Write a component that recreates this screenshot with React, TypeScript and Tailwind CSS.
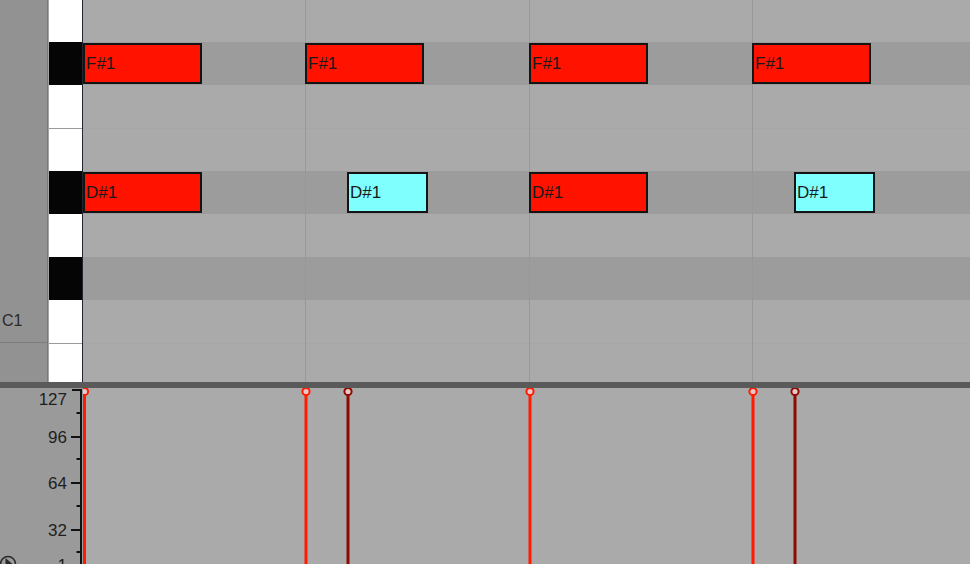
import React from "react";

type Row = { name: string; black: boolean; sep?: boolean; first?: boolean };
const rows: Row[] = [
  { name: "G1", black: false, first: true },
  { name: "F#1", black: true },
  { name: "F1", black: false },
  { name: "E1", black: false, sep: true },
  { name: "D#1", black: true },
  { name: "D1", black: false },
  { name: "C#1", black: true },
  { name: "C1", black: false },
  { name: "B0", black: false, sep: true },
];

type Note = { left: number; width: number; color: "red" | "cyan" };
const notes: Record<string, Note[]> = {
  "F#1": [
    { left: 0, width: 119, color: "red" },
    { left: 222, width: 119, color: "red" },
    { left: 446, width: 119, color: "red" },
    { left: 669, width: 119, color: "red" },
  ],
  "D#1": [
    { left: 0, width: 119, color: "red" },
    { left: 264, width: 81, color: "cyan" },
    { left: 446, width: 119, color: "red" },
    { left: 711, width: 81, color: "cyan" },
  ],
};

const beats = [222, 446, 669];
const stems = [
  { x: 1.5, dark: false },
  { x: 223, dark: false },
  { x: 265, dark: true },
  { x: 447, dark: false },
  { x: 670, dark: false },
  { x: 712, dark: true },
];

const FONT = "'Liberation Sans', Arial, sans-serif";

function Axis() {
  const major = [
    { y: 49, label: "96" },
    { y: 95, label: "64" },
    { y: 142, label: "32" },
  ];
  const minor = [25, 71, 118, 164];
  return (
    <svg width="83" height="176" className="block shrink-0">
      <rect x="0" y="0" width="83" height="176" fill="#9a9a9a" />
      <line x1="81" y1="1.5" x2="81" y2="176" stroke="#111" strokeWidth="2" />
      <line x1="72" y1="2" x2="82" y2="2" stroke="#111" strokeWidth="2" />
      <text x="67" y="17" textAnchor="end" fontSize="17" fill="#1e1e1e" fontFamily={FONT}>127</text>
      {major.map((m) => (
        <g key={m.label}>
          <line x1="71" y1={m.y} x2="81" y2={m.y} stroke="#111" strokeWidth="2" />
          <text x="67" y={m.y + 6} textAnchor="end" fontSize="17" fill="#1e1e1e" fontFamily={FONT}>{m.label}</text>
        </g>
      ))}
      {minor.map((y) => (
        <line key={y} x1="76.5" y1={y} x2="81" y2={y} stroke="#111" strokeWidth="2" />
      ))}
      <text x="67" y="183" textAnchor="end" fontSize="17" fill="#1e1e1e" fontFamily={FONT}>1</text>
      <circle cx="8" cy="176" r="7.5" fill="none" stroke="#2a2a2a" strokeWidth="1.5" />
      <path d="M5.5 170 L12.5 176 L5.5 182 Z" fill="#2a2a2a" />
    </svg>
  );
}

export default function App() {
  return (
    <div className="w-[970px] h-[564px] overflow-hidden bg-[#aaaaaa] font-['Liberation_Sans',Arial,sans-serif]">
      {/* piano roll */}
      <div className="flex h-[382px] overflow-hidden">
        {/* gutter */}
        <div className="w-[47px] shrink-0 bg-[#929292] flex flex-col">
          <div className="h-[300px] shrink-0" />
          <div className="h-[43px] shrink-0 border-b border-[#7c7c7c] flex items-center pl-[2px] text-[16px] text-[#2a2a2a]">
            C1
          </div>
        </div>
        <div className="w-px shrink-0 bg-[#7a7a7a]" />
        <div className="w-px shrink-0 bg-[#a4a4a4]" />
        {/* keys */}
        <div className="w-[33px] shrink-0 flex flex-col">
          {rows.map((r) => (
            <div
              key={r.name}
              className={`${r.first ? "h-[42px]" : "h-[43px]"} shrink-0 ${
                r.black ? "bg-[#050505]" : "bg-white"
              } ${r.sep ? "border-t-[1.5px] border-[#9a9a9a]" : ""}`}
            />
          ))}
        </div>
        <div className="w-px shrink-0 bg-[#23252f]" />
        {/* grid */}
        <div className="relative flex-1 flex flex-col">
          {rows.map((r) => (
            <div
              key={r.name}
              className={`relative ${r.first ? "h-[42px]" : "h-[43px]"} shrink-0 ${
                r.black ? "bg-[#9c9c9c]" : "bg-[#aaaaaa]"
              } ${r.sep ? "border-t border-[#a7a7a7]" : ""}`}
            >
              {(notes[r.name] || []).map((n, i) => (
                <div
                  key={i}
                  className={`absolute top-[1px] bottom-[1px] z-10 border-2 border-[#141414] flex items-center pl-px text-[17px] leading-none text-[#1a1a1a] ${
                    n.color === "red" ? "bg-[#ff1200]" : "bg-[#80ffff]"
                  }`}
                  style={{ left: n.left, width: n.width }}
                >
                  {r.name}
                </div>
              ))}
            </div>
          ))}
          {beats.map((b) => (
            <div
              key={b}
              className="absolute top-0 bottom-0 w-px bg-[#989898]"
              style={{ left: b }}
            />
          ))}
        </div>
      </div>
      {/* divider */}
      <div className="h-[6px] bg-[#5a5a5a]" />
      {/* velocity */}
      <div className="flex h-[176px]">
        <Axis />
        <div className="relative flex-1 bg-[#aaaaaa]">
          <svg width="887" height="176" className="absolute inset-0">
            {stems.map((s, i) => {
              const c = s.dark ? "#8f0a00" : "#ff1a00";
              return (
                <g key={i}>
                  <line x1={s.x} y1="6" x2={s.x} y2="176" stroke={c} strokeWidth="3" />
                  <circle cx={s.x} cy="3.5" r="3.6" fill="#e8c8c8" stroke={c} strokeWidth="2" />
                </g>
              );
            })}
          </svg>
        </div>
      </div>
    </div>
  );
}
